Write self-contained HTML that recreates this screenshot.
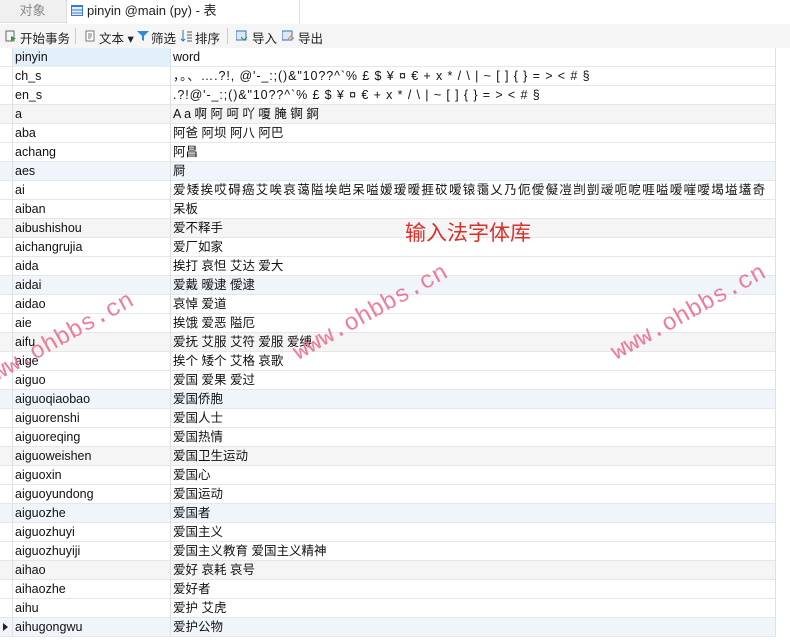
<!DOCTYPE html>
<html><head><meta charset="utf-8"><style>
*{margin:0;padding:0;box-sizing:border-box}
body{width:790px;height:644px;overflow:hidden;background:#fff;font-family:"Liberation Sans","Noto Sans CJK SC",sans-serif;font-size:12.5px;color:#111;position:relative}
.tabs{position:absolute;left:0;top:0;width:790px;height:23px;background:#f0f0f0;border-bottom:1px solid #ddd}
.t1{position:absolute;left:0;top:0;width:65px;height:23px;line-height:22px;text-align:center;color:#888;font-size:13px}
.t2{position:absolute;left:66px;top:0;width:234px;height:24px;background:#fff;line-height:22px;padding-left:20px;color:#222;border-left:1px solid #ddd;border-right:1px solid #ddd;font-size:13px}
.t2 i{position:absolute;left:4px;top:5px;width:12px;height:11px;border:1px solid #3a7bd5;background:repeating-linear-gradient(#3a7bd5 0 1px,#e6eefb 1px 3.3px)}
.rw{position:absolute;left:300px;top:0;width:490px;height:24px;background:#fff}
.tb{position:absolute;left:0;top:24px;width:790px;height:24px;background:#f5f5f5}
.tb span{position:absolute;top:4px;font-size:12.5px;color:#222}
.ic{position:absolute;top:6px;width:12px;height:12px}
.grid{position:absolute;left:0;top:48px;width:776px}
.r{position:relative;height:19px;border-bottom:1px solid #e6e6e6;white-space:nowrap}
.r div{position:absolute;top:0;height:19px;line-height:18px}
.c1{left:12px;width:159px;padding-left:2px;border-left:1px solid #e0e0e0;border-right:1px solid #e0e0e0}
.c2{left:171px;padding-left:2px;width:605px;overflow:hidden;border-right:1px solid #e0e0e0}
.h{background:#fff}.h .c1{background:#e3effb}
.g{background:#f5f5f5}.b{background:#f0f5fb}
.wm{position:absolute;font-family:"Liberation Mono",monospace;font-size:24px;color:#ec6f8e;transform:rotate(-29deg);transform-origin:left bottom;white-space:nowrap;opacity:.9}
.cn{position:absolute;left:405px;top:217px;font-size:21px;color:#d9302a}
</style></head><body>
<div class="tabs"><div class="t1">对象</div><div class="t2"><i></i>pinyin @main (py) - 表</div><div class="rw"></div></div>
<div class="tb">
<svg class="ic" style="left:5px" viewBox="0 0 12 12"><rect x="1" y="1" width="8" height="10" fill="none" stroke="#666"/><path d="M6 6l5 2.5-5 2.5z" fill="#2a9d3a"/></svg><span style="left:20px">开始事务</span>
<div style="position:absolute;left:75px;top:4px;width:1px;height:16px;background:#ccc"></div>
<svg class="ic" style="left:84px" viewBox="0 0 12 12"><rect x="2" y="1" width="8" height="10" fill="#fff" stroke="#777"/><path d="M4 4h4M4 6h4M4 8h3" stroke="#777"/></svg><span style="left:99px">文本 ▾</span>
<svg class="ic" style="left:137px" viewBox="0 0 12 12"><path d="M0 1h12L7 6v5L5 10V6z" fill="#2b8be0"/></svg><span style="left:151px">筛选</span>
<svg class="ic" style="left:180px" viewBox="0 0 12 12"><path d="M3 0v11M1 9l2 2 2-2" stroke="#2b6cd0" fill="none"/><path d="M7 2h5M7 5h5M7 8h5M7 11h5" stroke="#555"/></svg><span style="left:195px">排序</span>
<div style="position:absolute;left:227px;top:4px;width:1px;height:16px;background:#ccc"></div>
<svg class="ic" style="left:236px" viewBox="0 0 12 12"><rect x="0" y="1" width="10" height="9" fill="#dbe7f7" stroke="#3a6fc2"/><path d="M5 7l3 3 3-3" stroke="#2a9d3a" fill="none"/></svg><span style="left:252px">导入</span>
<svg class="ic" style="left:282px" viewBox="0 0 12 12"><rect x="0" y="1" width="10" height="9" fill="#dbe7f7" stroke="#3a6fc2"/><path d="M6 9l3-3 3 3" stroke="#e08a20" fill="none"/></svg><span style="left:298px">导出</span>
</div>
<div class="grid">
<div class="r h"><div class="c1">pinyin</div><div class="c2">word</div></div>
<div class="r"><div class="c1">ch_s</div><div class="c2" style="letter-spacing:0.9px">，。、….?!, @'-_:;()&amp;"10??^`% £ $ ¥ ¤ € + x * / \ | ~ [ ] { } = &gt; &lt; # §</div></div>
<div class="r"><div class="c1">en_s</div><div class="c2" style="letter-spacing:0.9px">.?!@'-_:;()&amp;"10??^`% £ $ ¥ ¤ € + x * / \ | ~ [ ] { } = &gt; &lt; # §</div></div>
<div class="r g"><div class="c1">a</div><div class="c2">A a 啊 阿 呵 吖 嗄 腌 锕 錒</div></div>
<div class="r"><div class="c1">aba</div><div class="c2">阿爸 阿坝 阿八 阿巴</div></div>
<div class="r"><div class="c1">achang</div><div class="c2">阿昌</div></div>
<div class="r b"><div class="c1">aes</div><div class="c2">屙</div></div>
<div class="r"><div class="c1">ai</div><div class="c2" style="letter-spacing:1.3px">爱矮挨哎碍癌艾唉哀蔼隘埃皑呆嗌嫒瑷暧捱砹嗳锿霭乂乃伌僾儗凒剀剴叆呃呝啀嗌嗳嘊噯堨塧壒奇</div></div>
<div class="r"><div class="c1">aiban</div><div class="c2">呆板</div></div>
<div class="r g"><div class="c1">aibushishou</div><div class="c2">爱不释手</div></div>
<div class="r"><div class="c1">aichangrujia</div><div class="c2">爱厂如家</div></div>
<div class="r"><div class="c1">aida</div><div class="c2">挨打 哀怛 艾达 爱大</div></div>
<div class="r b"><div class="c1">aidai</div><div class="c2">爱戴 暧逮 僾逮</div></div>
<div class="r"><div class="c1">aidao</div><div class="c2">哀悼 爱道</div></div>
<div class="r"><div class="c1">aie</div><div class="c2">挨饿 爱恶 隘厄</div></div>
<div class="r g"><div class="c1">aifu</div><div class="c2">爱抚 艾服 艾符 爱服 爱缚</div></div>
<div class="r"><div class="c1">aige</div><div class="c2">挨个 矮个 艾格 哀歌</div></div>
<div class="r"><div class="c1">aiguo</div><div class="c2">爱国 爱果 爱过</div></div>
<div class="r b"><div class="c1">aiguoqiaobao</div><div class="c2">爱国侨胞</div></div>
<div class="r"><div class="c1">aiguorenshi</div><div class="c2">爱国人士</div></div>
<div class="r"><div class="c1">aiguoreqing</div><div class="c2">爱国热情</div></div>
<div class="r g"><div class="c1">aiguoweishen</div><div class="c2">爱国卫生运动</div></div>
<div class="r"><div class="c1">aiguoxin</div><div class="c2">爱国心</div></div>
<div class="r"><div class="c1">aiguoyundong</div><div class="c2">爱国运动</div></div>
<div class="r b"><div class="c1">aiguozhe</div><div class="c2">爱国者</div></div>
<div class="r"><div class="c1">aiguozhuyi</div><div class="c2">爱国主义</div></div>
<div class="r"><div class="c1">aiguozhuyiji</div><div class="c2">爱国主义教育 爱国主义精神</div></div>
<div class="r g"><div class="c1">aihao</div><div class="c2">爱好 哀耗 哀号</div></div>
<div class="r"><div class="c1">aihaozhe</div><div class="c2">爱好者</div></div>
<div class="r"><div class="c1">aihu</div><div class="c2">爱护 艾虎</div></div>
<div class="r b"><div class="c1">aihugongwu</div><div class="c2">爱护公物</div><div style="left:3px;top:5px;width:0;height:0;border-left:5px solid #222;border-top:4px solid transparent;border-bottom:4px solid transparent"></div></div>
</div>
<div class="cn">输入法字体库</div>
<div class="wm" style="left:-12px;top:368px">www.ohbbs.cn</div>
<div class="wm" style="left:302px;top:340px">www.ohbbs.cn</div>
<div class="wm" style="left:620px;top:340px">www.ohbbs.cn</div>
</body></html>
